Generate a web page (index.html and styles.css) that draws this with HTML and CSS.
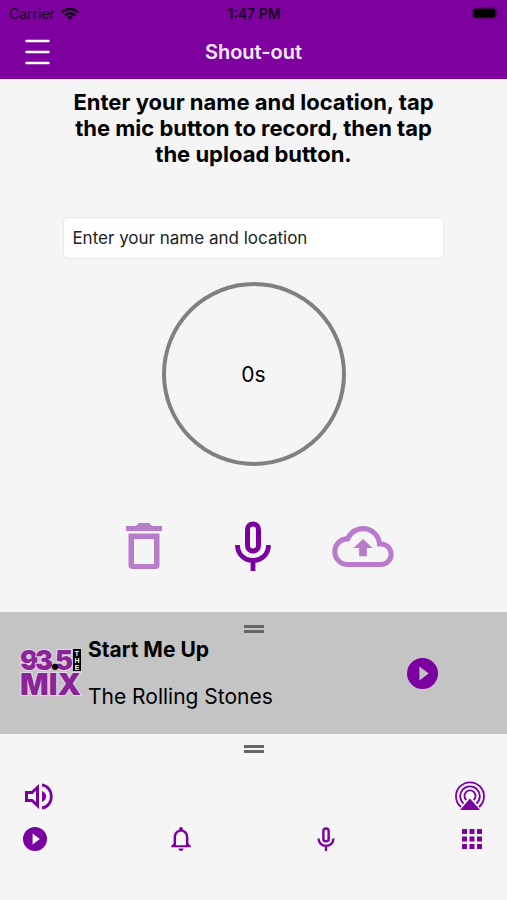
FILE: index.html
```html
<!DOCTYPE html>
<html lang="en">
<head>
<meta charset="utf-8">
<meta name="viewport" content="width=device-width, initial-scale=1">
<title>Shout-out</title>
<link rel="stylesheet" href="styles.css">
</head>
<body>
<svg class="sprite" aria-hidden="true">
  <symbol id="mic" viewBox="0 0 36 50">
    <rect x="12.5" y="3" width="11" height="27" rx="5.5" fill="none" stroke="currentColor" stroke-width="5"/>
    <path d="M2.500 24c0 9.500 7 15.500 15.500 15.500S33.500 33.500 33.500 24M18 39v11" fill="none" stroke="currentColor" stroke-width="4.800"/>
  </symbol>
  <symbol id="play" viewBox="2 2 20 20">
    <path fill="currentColor" d="M12 2a10 10 0 1 0 0 20 10 10 0 0 0 0-20zM10 16.500v-9l6 4.500z"/>
  </symbol>
</svg>
<div class="app">
  <header class="top">
    <div class="status">
      <div class="carrier">
        <span>Carrier</span>
        <svg width="18" height="13" viewBox="0 0 18 13" fill="none" stroke="currentColor" stroke-width="2.600">
          <path d="M1 5.200a11.500 11.500 0 0 1 16 0M4 8.400a7.200 7.200 0 0 1 10 0"/>
          <path d="M9 13L6 10.200a4.500 4.500 0 0 1 6 0z" fill="currentColor" stroke="none"/>
        </svg>
      </div>
      <span class="time">1:47 PM</span>
      <svg class="battery" width="27" height="12" viewBox="0 0 27 12">
        <rect x=".5" y=".5" width="24" height="11" rx="3" fill="none" stroke="#000" stroke-opacity=".3"/>
        <rect x="1.500" y="1.500" width="22" height="9" rx="2" fill="#000"/>
        <path d="M26 4v4" stroke="#000" stroke-opacity=".3"/>
      </svg>
    </div>
    <div class="nav">
      <button class="icon-button" aria-label="Menu">
        <svg width="25" height="26" viewBox="0 0 25 26" stroke="currentColor" stroke-width="2.500" stroke-linecap="round"><path d="M1.500 2h22M1.500 13h22M1.500 24h22"/></svg>
      </button>
      <h1 class="title">Shout-out</h1>
    </div>
  </header>

  <main class="main">
    <p class="intro">Enter your name and location, tap the mic button to record, then tap the upload button.</p>
    <input class="field" type="text" aria-label="Enter your name and location" placeholder="Enter your name and location">
    <div class="timer">0s</div>
    <div class="actions">
      <button class="icon-button faded" aria-label="Delete">
        <svg width="36" height="46" viewBox="0 0 36 46" fill="currentColor">
          <path d="M0 3h10l3-3h10l3 3h10v5H0z"/>
          <path fill-rule="evenodd" d="M2.500 10.500h31V42a4 4 0 0 1-4 4h-23a4 4 0 0 1-4-4zM8 16v25h20V16z"/>
        </svg>
      </button>
      <button class="icon-button" aria-label="Record"><svg width="36" height="50"><use href="#mic"/></svg></button>
      <button class="icon-button faded" aria-label="Upload">
        <svg width="62" height="41" viewBox="0 4 24 16" fill="currentColor">
          <path d="M19.350 10.040C18.670 6.590 15.640 4 12 4 9.110 4 6.600 5.640 5.350 8.040 2.340 8.360 0 10.910 0 14c0 3.310 2.690 6 6 6h13c2.760 0 5-2.240 5-5 0-2.640-2.050-4.780-4.650-4.960zM19 18H6c-2.210 0-4-1.790-4-4s1.790-4 4-4h.710C7.370 7.690 9.480 6 12 6c3.040 0 5.500 2.460 5.500 5.500v.500H19c1.660 0 3 1.340 3 3s-1.340 3-3 3z"/>
          <path d="M12 9.100l3.700 3.500h-2.200v3.200h-3v-3.200H8.300z"/>
        </svg>
      </button>
    </div>
  </main>

  <section class="player" aria-label="Now playing">
    <span class="grip"></span>
    <div class="now">
      <svg class="logo" width="62" height="50" viewBox="0 0 62 50" role="img" aria-label="93.5 The Mix">
        <g class="logo-type">
          <text class="digits" x="0 15 35" y="22">935</text>
          <text class="mix" x="0" y="47">MIX</text>
        </g>
        <text class="dot" x="29" y="22">.</text>
        <rect x="53" y="1" width="8" height="22"/>
        <g class="the"><text x="57" y="8">T</text><text x="57" y="15">H</text><text x="57" y="22">E</text></g>
      </svg>
      <div class="track">
        <strong>Start Me Up</strong>
        <span>The Rolling Stones</span>
      </div>
      <button class="icon-button" aria-label="Play"><svg width="31" height="31"><use href="#play"/></svg></button>
    </div>
  </section>

  <footer class="bottom">
    <span class="grip"></span>
    <div class="audio">
      <button class="icon-button" aria-label="Volume">
        <svg width="28" height="27" viewBox="0 0 28 27" fill="none" stroke="currentColor">
          <path d="M1.500 9.500H7l5.500-5v18l-5.500-5H1.500z" stroke-width="3"/>
          <path d="M17 8c5.500 2 5.500 9 0 11z" fill="currentColor" stroke="none"/>
          <path d="M17 1.800c12.500 2.200 12.500 21.200 0 23.400" stroke-width="2.800"/>
        </svg>
      </button>
      <button class="icon-button" aria-label="AirPlay">
        <svg width="30" height="30" viewBox="0 0 30 30" fill="none" stroke="currentColor" stroke-width="1.800">
          <path d="M6 26A14 14 0 1 1 24 26M8.500 22.500A9.800 9.800 0 1 1 21.500 22.500M11.300 19A5.500 5.500 0 1 1 18.700 19"/>
          <path d="M15 17.500L25 29H5z" fill="currentColor" stroke="none"/>
        </svg>
      </button>
    </div>
    <nav class="tabs" aria-label="Sections">
      <button class="icon-button tab" aria-label="Listen"><svg width="24" height="24"><use href="#play"/></svg></button>
      <button class="icon-button tab" aria-label="Alerts">
        <svg width="20" height="24" viewBox="4 2.500 16 19.500" fill="currentColor"><path d="M12 22c1.100 0 2-.9 2-2h-4c0 1.100.9 2 2 2zm6-6v-5c0-3.070-1.630-5.640-4.500-6.320V4c0-.83-.67-1.500-1.500-1.500s-1.500.67-1.500 1.500v.68C7.640 5.360 6 7.920 6 11v5l-2 2v1h16v-1zm-2 1.300H8V11c0-2.480 1.510-4.700 4-4.700s4 2.220 4 4.700z"/></svg>
      </button>
      <button class="icon-button tab" aria-label="Shout-out"><svg width="18" height="24"><use href="#mic"/></svg></button>
      <button class="icon-button tab" aria-label="More">
        <svg width="20" height="20" viewBox="0 0 20 20" fill="currentColor"><path d="M0 0h5v5H0zM7.500 0h5v5h-5zM15 0h5v5h-5zM0 7.500h5v5H0zM7.500 7.500h5v5h-5zM15 7.500h5v5h-5zM0 15h5v5H0zM7.500 15h5v5h-5zM15 15h5v5h-5z"/></svg>
      </button>
    </nav>
  </footer>
</div>
</body>
</html>
```
FILE: styles.css
```css
* { box-sizing: border-box; }
body {
  margin: 0;
  background: #f5f5f5;
  color: #000;
  font-family: Inter, "Liberation Sans", sans-serif;
}
.sprite { position: absolute; width: 0; height: 0; }
.app { display: flex; flex-direction: column; min-height: 100vh; }
svg { display: block; }
.icon-button {
  display: flex;
  align-items: center;
  justify-content: center;
  padding: 0;
  border: 0;
  background: none;
  color: #7b00a0;
}
.faded { color: #b97ccc; }

.top { background: #7e009f; padding-bottom: 1px; }
.status {
  display: grid;
  grid-template-columns: 1fr auto 1fr;
  align-items: center;
  height: 26px;
  padding: 0 8px 0 9px;
  font-size: 14px;
  color: #160020;
}
.carrier { display: flex; align-items: center; gap: 6px; }
.time { font-size: 14px; font-weight: 600; }
.battery { justify-self: end; }
.nav {
  display: grid;
  grid-template-columns: 25px 1fr 25px;
  align-items: center;
  height: 52px;
  padding: 0 25px;
}
.nav .icon-button { color: #fff; }
.title { margin: 0; font-size: 20px; font-weight: 600; text-align: center; color: #f6eaff; }

.main { display: flex; flex-direction: column; align-items: center; flex: 1; }
.intro {
  width: 75%;
  margin: 10px 0 0;
  font-size: 22px;
  font-weight: 700;
  line-height: 26px;
  text-align: center;
}
.field {
  width: 75%;
  height: 42px;
  margin-top: 50px;
  padding: 0 8px;
  border: 1px solid #e8e8e8;
  border-radius: 5px;
  background: #fff;
  font: 17px Inter, "Liberation Sans", sans-serif;
}
.field::placeholder { color: #222; opacity: 1; }
.timer {
  display: grid;
  place-items: center;
  width: 184px;
  height: 184px;
  margin-top: 23px;
  border: 4px solid #808080;
  border-radius: 50%;
  font-size: 21px;
}
.actions {
  display: grid;
  grid-template-columns: repeat(3, 1fr);
  width: 65%;
  height: 50px;
  margin: 55px 0 40px;
}

.player { padding: 13px 0 21px; background: #c4c4c4; }
.grip {
  display: block;
  width: 20px;
  height: 8px;
  margin: 0 auto;
  border: solid #666;
  border-width: 3px 0;
}
.now { display: flex; align-items: center; padding: 0 69px 0 20px; }
.track { display: flex; flex: 1; flex-direction: column; gap: 19px; padding: 3px 0 2px 6px; }
.track strong, .track span { font-size: 21px; line-height: 28px; }
.logo { overflow: visible; }
.logo-type { fill: #8b2499; stroke: #e6d9e8; stroke-width: 2px; paint-order: stroke; }
.digits { font: 900 27px Inter, sans-serif; }
.dot { font: 900 32px Inter, sans-serif; }
.mix { font: 900 30px Inter, sans-serif; }
.the { fill: #fff; font: 900 7px "Liberation Sans", sans-serif; text-anchor: middle; }

.bottom { height: 166px; padding-top: 11px; }
.audio { display: flex; align-items: center; justify-content: space-between; padding: 28px 22px 0 25px; }
.tabs { display: flex; align-items: center; justify-content: space-between; padding: 16px 22px 0; }
.tab { width: 26px; height: 24px; }
```
